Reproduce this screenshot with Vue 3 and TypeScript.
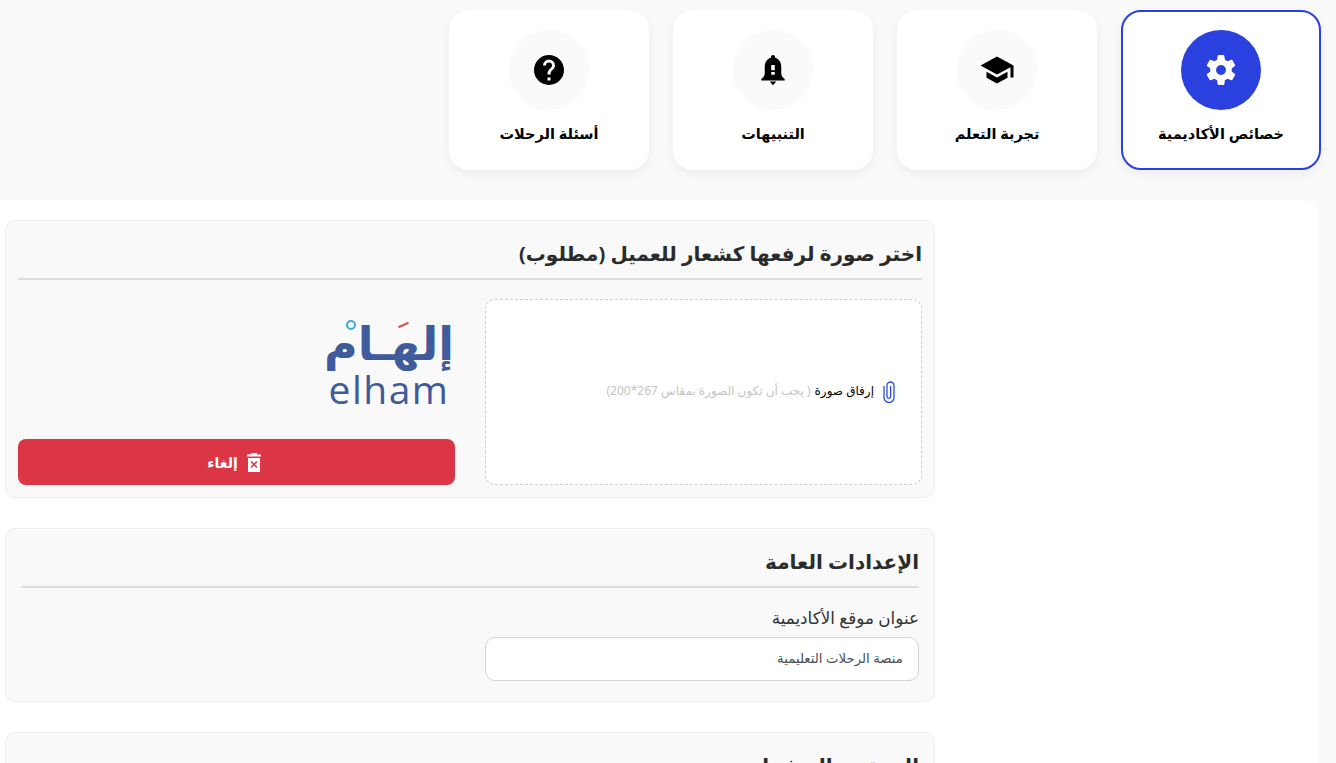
<script setup lang="ts">
interface Tab { label: string; path: string; size: number; active?: boolean }
const tabs: Tab[] = [
  { label: 'خصائص الأكاديمية', active: true, size: 36, path: 'M12 15.300A3.300 3.300 0 1 1 12 8.700a3.300 3.300 0 0 1 0 6.600zm7.100-2.300c.06-.33.1-.66.1-1s-.04-.67-.1-1l2.200-1.700c.2-.15.25-.42.12-.64l-1.900-3.300c-.12-.22-.39-.31-.61-.22l-2.600 1.050c-.52-.39-1.100-.73-1.700-.98l-.4-2.770A.5.5 0 0 0 13.700 2H10.300a.5.5 0 0 0-.5.42l-.4 2.770c-.6.25-1.180.59-1.700.98l-2.600-1.050c-.22-.09-.49 0-.61.22l-1.900 3.300c-.13.22-.07.49.12.64L4.900 11c-.06.33-.1.660-.1 1s.04.67.1 1l-2.200 1.700c-.19.15-.25.42-.12.64l1.900 3.300c.12.22.39.3.61.22l2.600-1.050c.52.4 1.100.74 1.700.99l.4 2.770c.04.24.25.42.5.42h3.400c.25 0 .46-.18.5-.42l.4-2.770c.6-.25 1.180-.59 1.700-.99l2.600 1.050c.22.08.49 0 .61-.22l1.900-3.300c.12-.22.07-.49-.12-.64z' },
  { label: 'تجربة التعلم', size: 36, path: 'M12 3L1 9l11 6l9-4.910V17h2V9M5 13.180v4L12 21l7-3.820v-4L12 17z' },
  { label: 'التنبيهات', size: 36, path: 'M12 2a1.400 1.400 0 0 1 1.400 1.400v.5C16 4.600 17.500 7 17.500 10v4.500c0 1.400 1.200 2.600 2.300 3.500v1H4.200v-1c1.100-.9 2.300-2.100 2.300-3.500V10c0-3 1.500-5.400 4.100-6.100v-.5A1.400 1.400 0 0 1 12 2zM10.800 8.700v3.400h2.400V8.700zM10.800 13.300v1.800h2.400v-1.800zM9.800 19.700h4.400L12 22.200z' },
  { label: 'أسئلة الرحلات', size: 36, path: 'M15.070 11.250l-.9.920C13.450 12.890 13 13.500 13 15h-2v-.5c0-1.110.45-2.110 1.170-2.830l1.240-1.260c.37-.36.59-.86.59-1.410a2 2 0 0 0-2-2a2 2 0 0 0-2 2H8a4 4 0 0 1 4-4a4 4 0 0 1 4 4c0 .88-.36 1.670-.93 2.250M13 19h-2v-2h2M12 2A10 10 0 0 0 2 12a10 10 0 0 0 10 10a10 10 0 0 0 10-10c0-5.530-4.500-10-10-10' },
]
</script>

<template>
  <div class="page" dir="rtl">
    <nav class="tabs">
      <button v-for="t in tabs" :key="t.label" type="button" class="tab" :class="{ active: t.active }">
        <span class="disc">
          <svg :width="t.size" :height="t.size" viewBox="0 0 24 24" fill="currentColor"><path :d="t.path" fill-rule="evenodd" /></svg>
        </span>
        <span class="tab-label">{{ t.label }}</span>
      </button>
    </nav>

    <main class="panel">
      <section class="card first">
        <h2 class="title">اختر صورة لرفعها كشعار للعميل (مطلوب)</h2>
        <div class="upload-row">
          <label class="drop">
            <svg class="clip" width="14" height="22" viewBox="0 0 14 22" fill="none" stroke="#2a4de0" stroke-width="1.300">
              <path d="M2 5.500v11a5 5 0 0 0 10 0V4.500a3.500 3.500 0 0 0-7 0v11a1.800 1.800 0 0 0 3.600 0V5.500" stroke-linecap="round" />
            </svg>
            <span class="attach">إرفاق صورة</span>
            <span class="hint">( يجب أن تكون الصورة بمقاس 267*200)</span>
          </label>
          <div class="preview">
            <div class="logo-wrap">
              <div class="logo" dir="ltr">
                <span class="logo-dot"></span>
                <span class="logo-mark"></span>
                <span class="logo-ar" dir="rtl">إلهـام</span>
                <span class="logo-en">elham</span>
              </div>
            </div>
            <button type="button" class="cancel">
              <svg width="14" height="19" viewBox="0 0 14 19" fill="#fff">
                <path d="M4.500 0h5l1 1.500H14v2H0v-2h3.500zM1 5h12v14H1zM4.600 8 3.500 9.100 5.900 11.500 3.500 13.900 4.600 15 7 12.600 9.400 15 10.500 13.900 8.100 11.500 10.500 9.100 9.400 8 7 10.400z" fill-rule="evenodd" />
              </svg>
              <span>إلغاء</span>
            </button>
          </div>
        </div>
      </section>

      <section class="card second">
        <h2 class="title">الإعدادات العامة</h2>
        <label class="field-label" for="site">عنوان موقع الأكاديمية</label>
        <input id="site" class="field" value="منصة الرحلات التعليمية" />
      </section>

      <section class="card third">
        <h2 class="title">المحتوى الصفحات</h2>
      </section>
    </main>
  </div>
</template>

<style>
html, body { margin: 0; background: #fafafa; overflow: hidden; }
</style>

<style scoped>
.page {
  height: 763px;
  overflow: hidden;
  background: #fafafa;
  font-family: "Noto Sans", "DejaVu Sans", sans-serif;
}
.tabs { display: flex; gap: 24px; padding: 10px 15px 0 0; }
.tab {
  width: 200px;
  height: 160px;
  box-sizing: border-box;
  display: flex;
  flex-direction: column;
  align-items: center;
  padding: 20px 0 0;
  background: #fff;
  border: 0;
  border-radius: 20px;
  box-shadow: 0 4px 12px rgba(0, 0, 0, 0.06);
  font-family: inherit;
}
.tab.active { border: 2px solid #2a41e0; padding-top: 18px; }
.disc {
  width: 80px;
  height: 80px;
  border-radius: 50%;
  background: #fafaf8;
  color: #000;
  display: flex;
  align-items: center;
  justify-content: center;
}
.active .disc { background: #2a41e0; color: #fff; }
.tab-label { margin-top: 12px; font-size: 14.500px; font-weight: 700; color: #000; line-height: 22px; }
.panel {
  margin-top: 30px;
  margin-right: 18px;
  width: 1318px;
  height: 563px;
  box-sizing: border-box;
  background: #fff;
  border-radius: 0 16px 0 0;
  padding: 20px 0 0 5px;
  display: flex;
  flex-direction: column;
  align-items: flex-end;
  gap: 30px;
}
.card {
  width: 930px;
  box-sizing: border-box;
  background: #f9f9f9;
  border: 1px solid #eee;
  border-radius: 10px;
  flex: none;
}
.first { height: 278px; padding: 18px 12px 12px; }
.second { height: 174px; padding: 18px 15px 0; }
.third { height: 120px; padding: 18px 15px 0; }
.title {
  margin: 0;
  height: 39px;
  font-size: 20px;
  line-height: 30px;
  font-weight: 700;
  color: #2b2b2b;
  border-bottom: 2px solid #ddd;
}
.upload-row { display: flex; gap: 30px; margin-top: 19px; }
.drop {
  width: 437px;
  height: 186px;
  box-sizing: border-box;
  display: flex;
  align-items: center;
  gap: 6px;
  padding-inline-start: 25px;
  background: #fff;
  border: 1px dashed #ccc;
  border-radius: 10px;
}
.clip { flex: none; }
.attach { font-size: 12px; color: #000; padding-bottom: 3px; margin-inline-start: 2px; }
.hint { font-size: 12px; color: #c4c4c4; margin-inline-start: -2px; padding-bottom: 3px; }
.preview { width: 437px; display: flex; flex-direction: column; justify-content: space-between; }
.logo-wrap { display: flex; justify-content: flex-start; padding-inline-start: 3px; padding-top: 14px; }
.logo { position: relative; display: flex; flex-direction: column; align-items: center; width: 126px; color: #3f5b9b; }
.logo-ar { height: 58px; font-size: 46px; line-height: 58px; font-weight: 700; white-space: nowrap; overflow: hidden; }
.logo-en { font-size: 39px; line-height: 36px; font-weight: 500; letter-spacing: 1.500px; font-family: "Open Sans", sans-serif; }
.logo-dot {
  position: absolute;
  left: 20px;
  top: 7px;
  width: 6px;
  height: 6px;
  border: 2px solid #3fa9e0;
  border-radius: 50%;
}
.logo-mark {
  position: absolute;
  left: 72px;
  top: 11px;
  width: 11px;
  height: 2px;
  background: #d9534f;
  transform: rotate(-24deg);
}
.cancel {
  height: 46px;
  border: 0;
  border-radius: 8px;
  background: #dc3545;
  color: #fff;
  font-family: inherit;
  font-size: 14px;
  font-weight: 700;
  display: flex;
  align-items: center;
  justify-content: center;
  gap: 9px;
  padding: 0;
  padding-inline-start: 5px;
}
.field-label { display: block; margin-top: 18px; font-size: 16.800px; line-height: 24px; color: #333; }
.field {
  display: block;
  width: 434px;
  height: 44px;
  margin-top: 7px;
  box-sizing: border-box;
  padding: 0 15px 3px;
  background: #fff;
  border: 1px solid #d4d4d4;
  border-radius: 10px;
  font-family: inherit;
  font-size: 13.300px;
  color: #495057;
}
</style>
